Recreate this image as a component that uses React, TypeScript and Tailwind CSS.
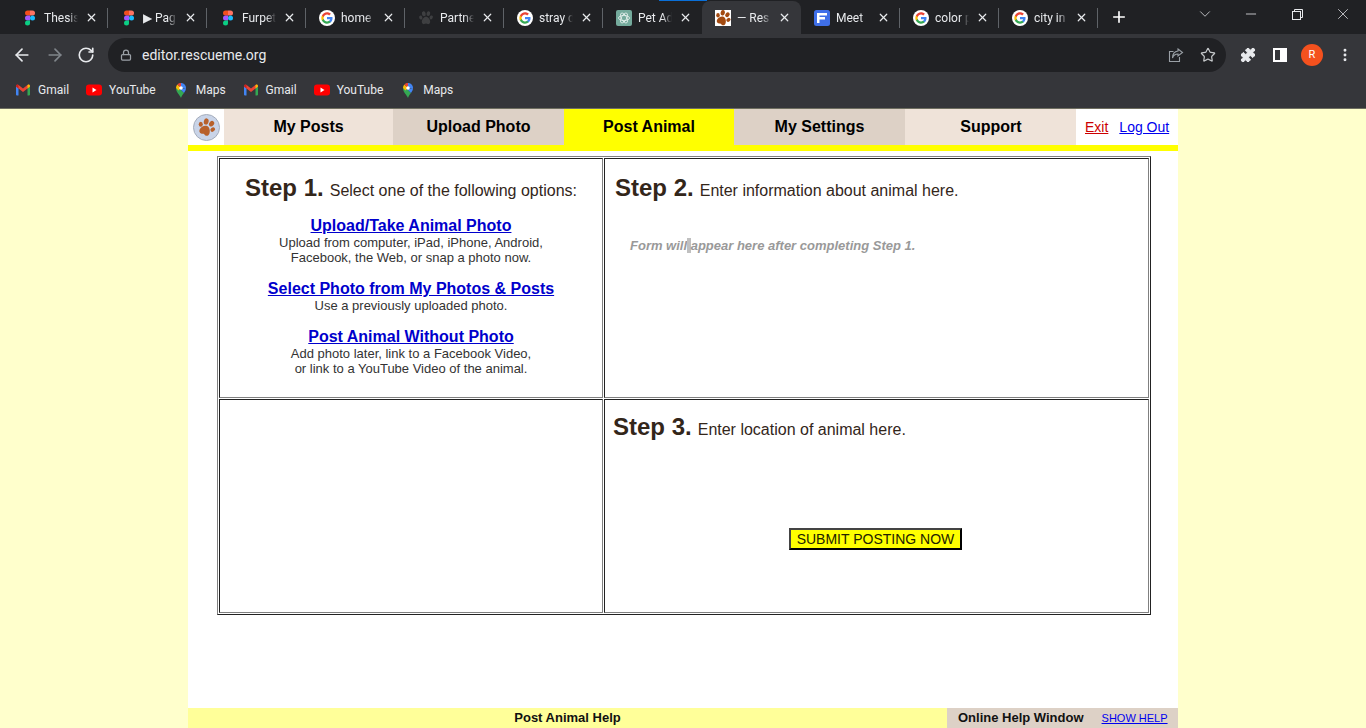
import { ArrowLeft, ArrowRight, RotateCw, Lock, X, Plus, ChevronDown, Minus, Star, Puzzle, MoreVertical } from "lucide-react"

function FigmaIcon() {
  return (
    <svg width="16" height="16" viewBox="0 0 16 16" className="shrink-0">
      <path d="M5.500 0.500H8V5.500H5.500a2.500 2.500 0 0 1 0-5z" fill="#f24e1e" />
      <path d="M8 0.500h2.500a2.500 2.500 0 0 1 0 5H8z" fill="#ff7262" />
      <path d="M5.500 5.500H8v5H5.500a2.500 2.500 0 0 1 0-5z" fill="#a259ff" />
      <circle cx="10.500" cy="8" r="2.500" fill="#1abcfe" />
      <path d="M5.500 10.500H8V13a2.500 2.500 0 1 1-2.500-2.500z" fill="#0acf83" />
    </svg>
  )
}

function GoogleIcon() {
  return (
    <svg width="16" height="16" viewBox="0 0 48 48" className="shrink-0">
      <circle cx="24" cy="24" r="24" fill="#fff" />
      <path d="M40.600 24.400c0-1.200-.1-2.300-.3-3.400H24v6.500h9.300c-.4 2.100-1.600 3.900-3.400 5.100v4.300h5.500c3.200-3 5.200-7.300 5.200-12.500z" fill="#4285f4" />
      <path d="M24 41c4.600 0 8.500-1.500 11.400-4.100l-5.500-4.300c-1.500 1-3.500 1.600-5.900 1.600-4.500 0-8.300-3-9.600-7.100H8.700v4.400C11.500 37.100 17.300 41 24 41z" fill="#34a853" />
      <path d="M14.400 27.100c-.4-1-.6-2-.6-3.100s.2-2.100.6-3.100v-4.400H8.700C7.600 18.700 7 21.300 7 24s.6 5.300 1.700 7.500z" fill="#fbbc05" />
      <path d="M24 13.800c2.500 0 4.800.9 6.600 2.600l4.900-4.900C32.500 8.700 28.600 7 24 7c-6.700 0-12.500 3.900-15.300 9.500l5.700 4.400c1.300-4.100 5.100-7.100 9.600-7.100z" fill="#ea4335" />
    </svg>
  )
}

function PawShape({ fill }: { fill: string }) {
  return (
    <g fill={fill}>
      <ellipse cx="5.800" cy="3.800" rx="1.900" ry="2.500" transform="rotate(-12 5.800 3.800)" />
      <ellipse cx="10.400" cy="3.600" rx="1.800" ry="2.400" transform="rotate(14 10.400 3.600)" />
      <ellipse cx="2.800" cy="7.600" rx="1.600" ry="2" transform="rotate(-25 2.800 7.600)" />
      <ellipse cx="13.200" cy="7.400" rx="1.600" ry="2" transform="rotate(25 13.200 7.400)" />
      <path d="M8 6.800c2.200 0 4.200 2.700 4.200 5 0 1.700-1.300 2.500-2.300 2.300-.8-.1-1.200-.5-1.900-.5s-1.100.4-1.900.5c-1 .2-2.300-.6-2.300-2.300 0-2.300 2-5 4.200-5z" />
    </g>
  )
}

function PartnerIcon() {
  return (
    <svg width="16" height="16" viewBox="0 0 16 16" className="shrink-0">
      <PawShape fill="#3e3f41" />
    </svg>
  )
}

function RescueIcon() {
  return (
    <svg width="16" height="16" viewBox="0 0 16 16" className="shrink-0 bg-white">
      <g transform="rotate(25 8 8) translate(-0.800 -0.800) scale(1.100)">
        <PawShape fill="#a34a10" />
      </g>
    </svg>
  )
}

function OpenAiIcon() {
  return (
    <svg width="16" height="16" viewBox="0 0 16 16" className="shrink-0">
      <rect width="16" height="16" rx="2" fill="#74aa9c" />
      <g fill="none" stroke="#e8f2ef" strokeWidth="0.800">
        <ellipse cx="8" cy="8" rx="5.500" ry="2.600" />
        <ellipse cx="8" cy="8" rx="5.500" ry="2.600" transform="rotate(60 8 8)" />
        <ellipse cx="8" cy="8" rx="5.500" ry="2.600" transform="rotate(120 8 8)" />
      </g>
    </svg>
  )
}

function MeetIcon() {
  return (
    <svg width="16" height="16" viewBox="0 0 16 16" className="shrink-0">
      <rect width="16" height="16" rx="2.500" fill="#3f6fe8" />
      <path d="M3 3h10v2.500H5.500V7H11v2.500H5.500V13H3z" fill="#fff" />
    </svg>
  )
}

function GmailIcon() {
  return (
    <svg width="16" height="16" viewBox="0 0 16 16" className="shrink-0">
      <path d="M1 13.500V4l2.500 1.500v8H2a1 1 0 0 1-1-1z" fill="#4285f4" />
      <path d="M15 13.500V4l-2.500 1.500v8H14a1 1 0 0 0 1-1z" fill="#34a853" />
      <path d="M1 4.500C1 2.800 2.500 2.200 3.600 3L8 6.400 12.400 3c1.100-.8 2.600-.2 2.600 1.500l-2.500 2L8 10 3.500 6.500z" fill="#ea4335" />
      <path d="M12.500 3l.2-.1C13.800 2.200 15 2.800 15 4.500l-2.500 2z" fill="#fbbc05" />
      <path d="M1 4.500C1 2.800 2.200 2.200 3.300 2.900l.2.100v3.500z" fill="#c5221f" />
    </svg>
  )
}

function YoutubeIcon() {
  return (
    <svg width="16" height="16" viewBox="0 0 16 16" className="shrink-0">
      <rect y="2.500" width="16" height="11" rx="3" fill="#f00" />
      <path d="M6.500 5.500L10.500 8l-4 2.500z" fill="#fff" />
    </svg>
  )
}

function MapsIcon() {
  return (
    <svg width="16" height="16" viewBox="0 0 16 16" className="shrink-0">
      <path d="M8 16C6.800 12.800 3 10.500 3 6l5 2 3 3c-1.500 2-2.500 3-3 5z" fill="#34a853" />
      <path d="M3 6c0-1.500.6-2.700 1.500-3.600L8 6 5.500 8.500z" fill="#fbbc05" />
      <path d="M4.500 2.400C5.400 1.500 6.600 1 8 1l1 2-1 3z" fill="#ea4335" />
      <path d="M8 1c2.800 0 5 2.200 5 5L8 6z" fill="#4285f4" />
      <path d="M13 6c0 2-1 3.500-2 5L7 7z" fill="#4285f4" />
      <circle cx="8" cy="6" r="1.800" fill="#fff" />
    </svg>
  )
}

function ShareIcon() {
  return (
    <svg width="16" height="16" viewBox="0 0 16 16" fill="none" stroke="#9aa0a6" strokeWidth="1.100" className="ml-auto shrink-0">
      <path d="M5.500 4.500H1.500v10h10V10" />
      <path d="M10 2l4.500 3.500L10 9V7c-2.500 0-4.500 1-5.500 4 0-4 2-6.500 5.500-7z" />
    </svg>
  )
}

const tabs = [
  { title: "Thesis", icon: <FigmaIcon />, sep: true },
  { title: "▶ Pag", icon: <FigmaIcon />, sep: true },
  { title: "Furpet", icon: <FigmaIcon />, sep: true },
  { title: "home", icon: <GoogleIcon />, sep: true },
  { title: "Partne", icon: <PartnerIcon />, sep: true },
  { title: "stray d", icon: <GoogleIcon />, sep: true },
  { title: "Pet Ad", icon: <OpenAiIcon />, sep: false },
  { title: "— Res", icon: <RescueIcon />, sep: false, active: true },
  { title: "Meet", icon: <MeetIcon />, sep: true },
  { title: "color p", icon: <GoogleIcon />, sep: true },
  { title: "city in", icon: <GoogleIcon />, sep: true },
]

const bookmarks = [
  { title: "Gmail", icon: <GmailIcon /> },
  { title: "YouTube", icon: <YoutubeIcon /> },
  { title: "Maps", icon: <MapsIcon /> },
  { title: "Gmail", icon: <GmailIcon /> },
  { title: "YouTube", icon: <YoutubeIcon /> },
  { title: "Maps", icon: <MapsIcon /> },
]

const navItems = [
  { label: "My Posts", cls: "w-[169px] bg-[#efe3d9]" },
  { label: "Upload Photo", cls: "w-[171px] bg-[#ddd1c6]" },
  { label: "Post Animal", cls: "w-[170px] bg-[#ffff00]" },
  { label: "My Settings", cls: "w-[171px] bg-[#ddd1c6]" },
  { label: "Support", cls: "w-[171px] bg-[#efe3d9] pl-px" },
]

function TabStrip() {
  return (
    <div className="relative flex h-[34px] shrink-0 items-end bg-[#202124] pl-[9px] font-['Roboto',sans-serif] text-[12px] text-[#e8eaed]">
      <div className="absolute left-[659px] top-0 h-px w-[48px] bg-[#0a6fd8]" />
      {tabs.map((tab, i) => (
        <div
          key={i}
          className={`flex h-[33px] w-[99px] shrink-0 items-center pl-[13px] ${tab.active ? "rounded-t-lg bg-[#35363a]" : ""}`}
        >
          {tab.icon}
          <span className="ml-[6px] w-[34px] shrink-0 overflow-hidden whitespace-nowrap [mask-image:linear-gradient(to_right,black_72%,transparent)]">
            {tab.title}
          </span>
          <X size={13} strokeWidth={2.2} className="ml-[7px] shrink-0 text-[#e8eaed]" />
          <div className={`ml-[9px] h-[20px] w-px shrink-0 ${tab.sep ? "bg-[#5f6368]" : ""}`} />
        </div>
      ))}
      <Plus size={18} strokeWidth={2.2} className="mb-[8px] ml-[12px] text-white" />
      <div className="ml-auto flex h-full text-[#e8eaed]">
        <div className="flex h-[28px] w-[46px] items-center justify-center"><ChevronDown size={18} strokeWidth={1} /></div>
        <div className="flex h-[28px] w-[46px] items-center justify-center"><Minus size={16} strokeWidth={1.200} /></div>
        <div className="flex h-[28px] w-[46px] items-center justify-center">
          <svg width="11" height="11" viewBox="0 0 11 11" fill="none" stroke="currentColor">
            <rect x="0.500" y="2.500" width="8" height="8" />
            <path d="M2.500 2.500V.5h8v8H8.500" />
          </svg>
        </div>
        <div className="flex h-[28px] w-[46px] items-center justify-center"><X size={18} strokeWidth={1} /></div>
      </div>
    </div>
  )
}

function Toolbar() {
  return (
    <div className="flex h-[38px] shrink-0 items-end bg-[#35363a] text-[#e8eaed]">
      <div className="flex h-[34px] w-[108px] items-center pl-[12px]">
        <ArrowLeft size={20} strokeWidth={2} />
        <ArrowRight size={20} strokeWidth={2} className="ml-[13px] text-[#80868b]" />
        <RotateCw size={18} strokeWidth={2.200} className="ml-[12px]" />
      </div>
      <div className="flex h-[34px] w-[1118px] items-center rounded-full bg-[#202124] pl-[12px] pr-[10px]">
        <Lock size={12} strokeWidth={2.500} className="text-[#9aa0a6]" />
        <span className="ml-[10px] font-['Roboto',sans-serif] text-[14px]">editor.rescueme.org</span>
        <ShareIcon />
        <Star size={16} strokeWidth={1.800} className="ml-[16px] text-[#c4c7c9]" />
      </div>
      <div className="flex h-[34px] flex-1 items-center pl-[14px]">
        <Puzzle size={16} fill="#e8eaed" strokeWidth={1.500} />
        <div className="ml-[17px] flex h-[14px] w-[14px] shrink-0 justify-end border-2 border-white">
          <div className="h-full w-[5px] bg-white" />
        </div>
        <div className="ml-[14px] flex h-[22px] w-[22px] shrink-0 items-center justify-center rounded-full bg-[#f4511e] font-['Roboto',sans-serif] text-[11px] text-white">R</div>
        <MoreVertical size={16} strokeWidth={2.400} className="ml-[14px] shrink-0" />
      </div>
    </div>
  )
}

function BookmarksBar() {
  return (
    <div className="flex h-[36px] shrink-0 items-center gap-[17px] bg-[#35363a] pl-[15px] font-['Roboto',sans-serif] text-[12px] text-[#e8eaed]">
      {bookmarks.map((b, i) => (
        <div key={i} className="flex items-center gap-[7px]">
          {b.icon}
          <span>{b.title}</span>
        </div>
      ))}
    </div>
  )
}

function NavBar() {
  return (
    <div className="flex h-[36px] shrink-0 bg-white">
      <div className="flex w-[36px] items-center justify-center">
        <svg width="27" height="27" viewBox="0 0 27 27">
          <circle cx="13.500" cy="13.500" r="13" fill="#c9d4e8" stroke="#a4acbb" strokeWidth="1" />
          <g transform="rotate(25 13.500 13.500) translate(3.400 3.400) scale(1.260)">
            <PawShape fill="#b8602a" />
          </g>
        </svg>
      </div>
      {navItems.map((item) => (
        <div key={item.label} className={`flex items-center justify-center text-[16px] font-bold text-black ${item.cls}`}>
          {item.label}
        </div>
      ))}
      <div className="flex flex-1 items-center gap-[11px] pl-[9px] text-[14px]">
        <a href="#" className="text-[#cc0000] underline">Exit</a>
        <a href="#" className="text-[#0000ee] underline">Log Out</a>
      </div>
    </div>
  )
}

function StepTitle({ step, text }: { step: string; text: string }) {
  return (
    <div className="whitespace-nowrap text-[#33261a]">
      <span className="text-[24px] font-bold">{step}</span>
      <span className="ml-[6px] text-[16px]">{text}</span>
    </div>
  )
}

function Option({ link, lines }: { link: string; lines: string[] }) {
  return (
    <div className="text-center">
      <a href="#" className="block text-[16px] font-bold leading-[18px] text-[#0000cc] underline">{link}</a>
      {lines.map((line) => (
        <p key={line} className="text-[13px] leading-[15px] text-[#333333]">{line}</p>
      ))}
    </div>
  )
}

const cellBorder = "border border-b-[#808080] border-l-[#222222] border-r-[#808080] border-t-[#222222]"

function StepsTable() {
  return (
    <div className="ml-[29px] mt-[5px] grid w-[934px] grid-cols-[384px_545px] grid-rows-[240px_214px] gap-px border border-b-[#222222] border-l-[#808080] border-r-[#222222] border-t-[#808080] p-px">
      <div className={`flex flex-col items-center pt-[11px] ${cellBorder}`}>
        <StepTitle step="Step 1." text="Select one of the following options:" />
        <div className="mt-[11px]">
          <Option link="Upload/Take Animal Photo" lines={["Upload from computer, iPad, iPhone, Android,", "Facebook, the Web, or snap a photo now."]} />
        </div>
        <div className="mt-[15px]">
          <Option link="Select Photo from My Photos & Posts" lines={["Use a previously uploaded photo."]} />
        </div>
        <div className="mt-[15px]">
          <Option link="Post Animal Without Photo" lines={["Add photo later, link to a Facebook Video,", "or link to a YouTube Video of the animal."]} />
        </div>
      </div>
      <div className={`pl-[10px] pt-[11px] ${cellBorder}`}>
        <StepTitle step="Step 2." text="Enter information about animal here." />
        <p className="ml-[15px] mt-[30px] text-[13px] font-bold italic text-[#999999]">
          Form will<span className="bg-[#c0c0c0]"> </span>appear here after completing Step 1.
        </p>
      </div>
      <div className={cellBorder} />
      <div className={`flex flex-col pl-[8px] pt-[9px] ${cellBorder}`}>
        <StepTitle step="Step 3." text="Enter location of animal here." />
        <button className="ml-[176px] mt-[83px] h-[22px] w-[173px] border-2 border-b-black border-l-[#444444] border-r-black border-t-[#444444] bg-[#ffff00] text-[14px] leading-none text-[#222200]">
          SUBMIT POSTING NOW
        </button>
      </div>
    </div>
  )
}

function HelpBar() {
  return (
    <div className="flex h-[20px] shrink-0 items-center">
      <div className="flex h-full w-[759px] items-center justify-center bg-[#ffff99] text-[13px] font-bold text-[#111111]">
        Post Animal Help
      </div>
      <div className="flex h-full flex-1 items-center bg-[#ddd1c6] pl-[11px]">
        <span className="text-[13px] font-bold text-[#111111]">Online Help Window</span>
        <a href="#" className="ml-[18px] text-[11px] text-[#0000ee] underline">SHOW HELP</a>
      </div>
    </div>
  )
}

export default function App() {
  return (
    <div className="flex h-[728px] flex-col overflow-hidden bg-[#ffffcc] font-['Liberation_Sans',Arial,sans-serif]">
      <TabStrip />
      <Toolbar />
      <BookmarksBar />
      <div className="h-px shrink-0 bg-[#6e6e60]" />
      <main className="mx-auto flex w-[990px] flex-1 flex-col bg-white">
        <NavBar />
        <div className="h-[6px] shrink-0 bg-[#ffff00]" />
        <StepsTable />
        <div className="flex-1" />
        <HelpBar />
      </main>
    </div>
  )
}
